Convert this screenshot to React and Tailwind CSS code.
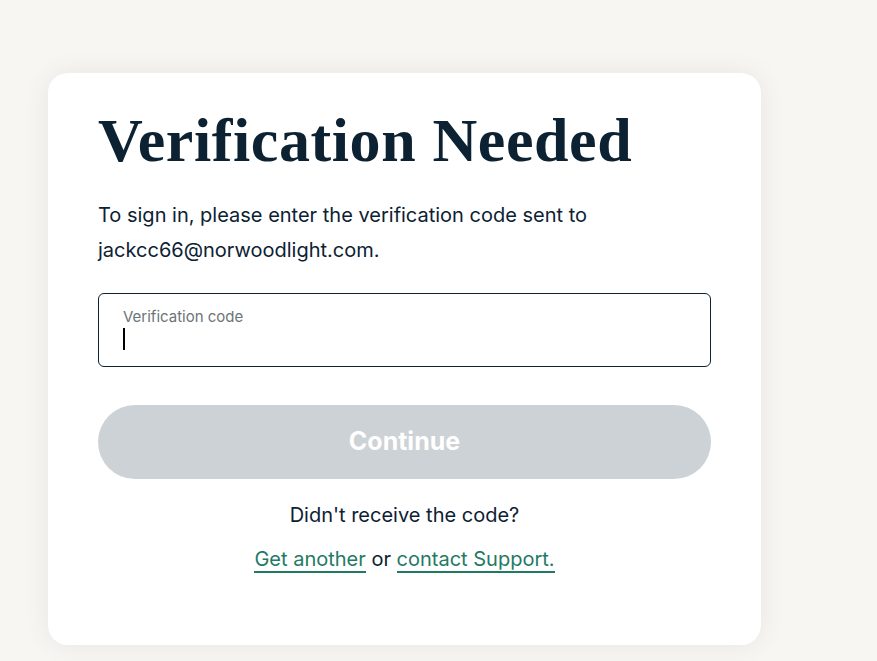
import React from 'react';

export default function App() {
  return (
    <div className="min-h-screen w-full bg-[#f7f6f2] pt-[73px] pl-[48px]" style={{ fontFamily: 'Inter, "Noto Sans", sans-serif' }}>
      {/* Card */}
      <div className="w-[713px] h-[572px] bg-white rounded-[20px] shadow-[0_0_28px_rgba(0,0,0,0.07)] pt-[35px] px-[50px]">
        <h1
          className="text-[62px] leading-[64px] font-bold text-[#0c2233] tracking-[0.6px]"
          style={{ fontFamily: '"Liberation Serif", "DejaVu Serif", serif' }}
        >
          Verification Needed
        </h1>

        <p className="mt-[26px] text-[20px] leading-[35px] text-[#0c2233]">
          To sign in, please enter the verification code sent to
          <br />
          jackcc66@norwoodlight.com.
        </p>

        {/* Code input */}
        <label className="mt-[25px] block h-[74px] rounded-[6px] border border-[#0c2233] px-[24px] pt-[14px]">
          <span className="block text-[15px] leading-[18px] text-[#6b7478]">Verification code</span>
          <span className="mt-[2px] block w-[2px] h-[22px] bg-black" />
        </label>

        <button
          disabled
          className="mt-[38px] w-full h-[74px] rounded-full bg-[#cdd2d6] text-white text-[25px] font-bold"
        >
          Continue
        </button>

        <div className="mt-[21px] text-center text-[20px] text-[#0c2233]">
          <p className="leading-[30px]">Didn't receive the code?</p>
          <p className="mt-[14px] leading-[30px]">
            <a href="#" className="text-[#237a64] border-b-2 border-[#237a64]">Get another</a>
            {' or '}
            <a href="#" className="text-[#237a64] border-b-2 border-[#237a64]">contact Support.</a>
          </p>
        </div>
      </div>
    </div>
  );
}
